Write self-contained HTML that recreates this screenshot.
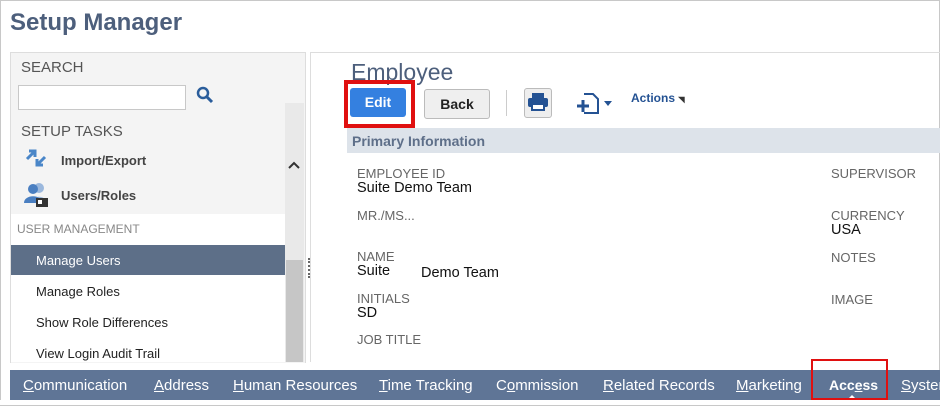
<!DOCTYPE html>
<html><head><style>
body{margin:0;width:940px;height:407px;overflow:hidden;background:#fff;font-family:"Liberation Sans",Arial,sans-serif;position:relative}
.abs{position:absolute}
.frame{position:absolute;left:0;top:0;width:938px;height:405px;border:1px solid #c8c8c8}
h1{position:absolute;left:10px;top:9px;margin:0;font-size:24px;font-weight:bold;color:#4d5f7c}
.lp{left:10px;top:52px;width:294px;height:310px;background:#f4f4f4;border:1px solid #ddd;border-bottom:none}
.lbl{color:#555;font-size:15px}
.menu{font-size:13px;color:#222;left:36px}
.fl{color:#666;font-size:13px}
.fv{color:#111;font-size:14.5px}
.tab{position:absolute;top:377px;color:#fff;font-size:15px}
.tab u{text-decoration:underline}
</style></head><body>
<div class="frame"></div>
<h1>Setup Manager</h1>
<div class="abs lp"></div>
<div class="abs lbl" style="left:21px;top:59px">SEARCH</div>
<div class="abs" style="left:18px;top:85px;width:166px;height:23px;background:#fff;border:1px solid #c8c8c8"></div>
<svg class="abs" style="left:196px;top:86px" width="20" height="18"><circle cx="7" cy="7" r="5" fill="none" stroke="#2a5d9b" stroke-width="2.5"/><path d="M11 11l5 5" stroke="#2a5d9b" stroke-width="3"/></svg>
<div class="abs lbl" style="left:21px;top:123px">SETUP TASKS</div>
<svg class="abs" style="left:24px;top:147px" width="24" height="24"><path d="M3 12l8-8M5 4h6v6" stroke="#4a86c8" stroke-width="3" fill="none"/><path d="M21 10l-8 8M19 18h-6v-6" stroke="#4a86c8" stroke-width="3" fill="none"/></svg>
<div class="abs" style="left:61px;top:153px;font-size:13px;font-weight:bold;color:#444">Import/Export</div>
<svg class="abs" style="left:22px;top:180px" width="28" height="28"><circle cx="17" cy="8" r="5" fill="#9bb8dd"/><path d="M10 22c0-7 14-7 14 0z" fill="#9bb8dd"/><circle cx="11" cy="9" r="5" fill="#4a7fc1"/><path d="M2 23c0-9 18-9 18 0z" fill="#4a7fc1"/><rect x="14" y="18" width="12" height="9" fill="#333"/><rect x="16" y="20" width="4" height="4" fill="#fff"/></svg>
<div class="abs" style="left:61px;top:188px;font-size:13px;font-weight:bold;color:#444">Users/Roles</div>
<div class="abs" style="left:285px;top:103px;width:19px;height:259px;background:#e9e9e9"></div>
<div class="abs" style="left:286px;top:260px;width:17px;height:102px;background:#c6c6c6"></div>
<svg class="abs" style="left:287px;top:160px" width="14" height="10"><path d="M2 8l5-5 5 5" stroke="#333" stroke-width="2" fill="none"/></svg>
<div class="abs" style="left:11px;top:214px;width:274px;height:148px;background:#fff"></div>
<div class="abs" style="left:17px;top:222px;font-size:12px;color:#888">USER MANAGEMENT</div>
<div class="abs" style="left:11px;top:245px;width:274px;height:30px;background:#5d6f88"></div>
<div class="abs menu" style="top:253px;color:#fff">Manage Users</div>
<div class="abs menu" style="top:284px">Manage Roles</div>
<div class="abs menu" style="top:315px">Show Role Differences</div>
<div class="abs menu" style="top:346px">View Login Audit Trail</div>
<div class="abs" style="left:308px;top:258px;width:2px;height:20px;border-left:2px dotted #666"></div>
<div class="abs" style="left:310px;top:52px;width:630px;height:1px;background:#ddd"></div>
<div class="abs" style="left:310px;top:52px;width:1px;height:310px;background:#ddd"></div>
<div class="abs" style="left:351px;top:59px;font-size:23px;color:#4d5f7c">Employee</div>
<div class="abs" style="left:344px;top:80px;width:63px;height:40px;border:4px solid #e01010"></div>
<div class="abs" style="left:350px;top:88px;width:56px;height:29px;background:#3480e0;border-radius:3px;color:#fff;font-weight:bold;font-size:14px;text-align:center;line-height:29px">Edit</div>
<div class="abs" style="left:424px;top:89px;width:64px;height:28px;background:#efefef;border:1px solid #bbb;border-radius:3px;font-weight:bold;font-size:14px;text-align:center;line-height:28px;color:#222">Back</div>
<div class="abs" style="left:506px;top:90px;width:1px;height:26px;background:#ccc"></div>
<div class="abs" style="left:524px;top:88px;width:26px;height:28px;background:#eee;border:1px solid #bbb;border-radius:3px"></div>
<svg class="abs" style="left:527px;top:92px" width="22" height="20"><rect x="5" y="1" width="12" height="5" fill="#245293"/><rect x="1" y="6" width="20" height="9" rx="2" fill="#245293"/><rect x="5" y="12" width="12" height="6" fill="#fff" stroke="#245293" stroke-width="2"/></svg>
<svg class="abs" style="left:576px;top:91px" width="40" height="24"><path d="M8 3h9l5 5v14H8" fill="none" stroke="#245293" stroke-width="2"/><path d="M1 15h12M7 9v12" stroke="#245293" stroke-width="3"/><path d="M28 10h8l-4 5z" fill="#245293"/></svg>
<div class="abs" style="left:631px;top:91px;font-size:12px;font-weight:bold;color:#245293">Actions <span style="font-size:8px;color:#333">◥</span></div>
<div class="abs" style="left:347px;top:128px;width:593px;height:25px;background:#dde3ea"></div>
<div class="abs" style="left:352px;top:133px;font-size:14px;font-weight:bold;color:#5e6f89">Primary Information</div>
<div class="abs fl" style="left:357px;top:166px">EMPLOYEE ID</div>
<div class="abs fv" style="left:357px;top:180px">Suite Demo Team</div>
<div class="abs fl" style="left:357px;top:208px">MR./MS...</div>
<div class="abs fl" style="left:357px;top:249px">NAME</div>
<div class="abs fv" style="left:357px;top:263px">Suite</div>
<div class="abs fv" style="left:421px;top:265px">Demo Team</div>
<div class="abs fl" style="left:357px;top:291px">INITIALS</div>
<div class="abs fv" style="left:357px;top:305px">SD</div>
<div class="abs fl" style="left:357px;top:332px">JOB TITLE</div>
<div class="abs fl" style="left:831px;top:166px">SUPERVISOR</div>
<div class="abs fl" style="left:831px;top:208px">CURRENCY</div>
<div class="abs fv" style="left:831px;top:222px">USA</div>
<div class="abs fl" style="left:831px;top:250px">NOTES</div>
<div class="abs fl" style="left:831px;top:292px">IMAGE</div>
<div class="abs" style="left:10px;top:370px;width:930px;height:30px;background:#5f7596"></div>
<div class="tab" style="left:23px"><u>C</u>ommunication</div>
<div class="tab" style="left:154px"><u>A</u>ddress</div>
<div class="tab" style="left:233px"><u>H</u>uman Resources</div>
<div class="tab" style="left:379px"><u>T</u>ime Tracking</div>
<div class="tab" style="left:496px">C<u>o</u>mmission</div>
<div class="tab" style="left:603px"><u>R</u>elated Records</div>
<div class="tab" style="left:736px"><u>M</u>arketing</div>
<div class="tab" style="left:829px;font-weight:bold;font-size:14px">Acc<u>e</u>ss</div>
<div class="tab" style="left:901px"><u>S</u>ystem</div>
<div class="abs" style="left:847px;top:395px;width:0;height:0;border-left:5px solid transparent;border-right:5px solid transparent;border-bottom:5px solid #fff"></div>
<div class="abs" style="left:811px;top:359px;width:73px;height:37px;border:2px solid #e01010"></div>
<div class="abs" style="left:0;top:400px;width:940px;height:7px;background:#fff"></div>
<div class="abs" style="left:0;top:405px;width:940px;height:1px;background:#c8c8c8"></div>
</body></html>
